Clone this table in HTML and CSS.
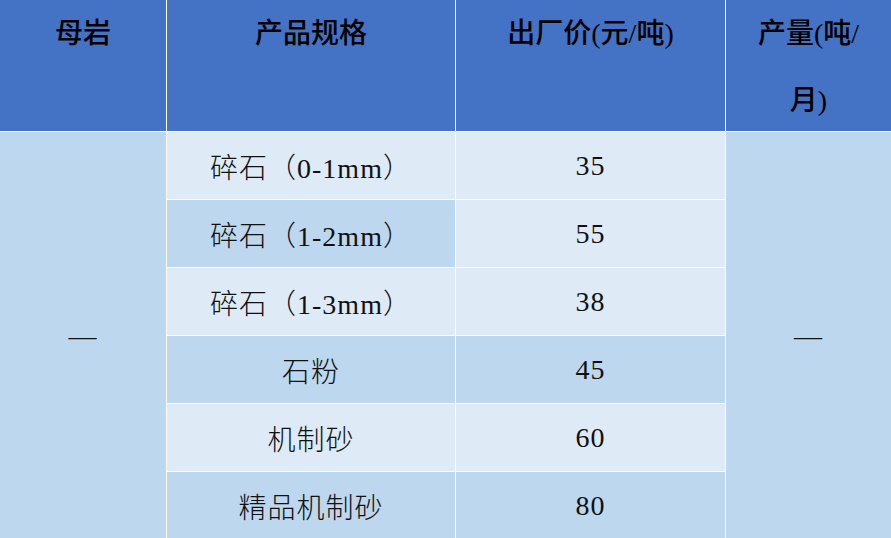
FILE: index.html
```html
<!DOCTYPE html>
<html lang="zh-CN">
<head>
<meta charset="utf-8">
<title>产品价格表</title>
<link rel="stylesheet" href="styles.css">
</head>
<body>
<div class="table">
  <div class="th">母岩</div>
  <div class="th">产品规格</div>
  <div class="th">出厂价(元/吨)</div>
  <div class="th">产量(吨/<br>月)</div>

  <div class="td span dark">—</div>
  <div class="td light">碎石（0-1mm）</div>
  <div class="td light">35</div>
  <div class="td span dark col4">—</div>

  <div class="td dark">碎石（1-2mm）</div>
  <div class="td light">55</div>

  <div class="td light">碎石（1-3mm）</div>
  <div class="td light">38</div>

  <div class="td dark">石粉</div>
  <div class="td dark">45</div>

  <div class="td light">机制砂</div>
  <div class="td light">60</div>

  <div class="td dark">精品机制砂</div>
  <div class="td dark">80</div>
</div>
</body>
</html>
```
FILE: styles.css
```css
html, body {
  margin: 0;
  padding: 0;
  background: #ffffff;
  overflow: hidden;
}

.table {
  display: grid;
  grid-template-columns: 166px 288px 269px 165px;
  grid-template-rows: 131px repeat(6, 67px);
  gap: 1px;
  background: #ffffff;
  width: 891px;
  font-family: "Liberation Serif", "Noto Sans CJK SC", serif;
  color: #000000;
}

.th {
  background: #4472c4;
  font-size: 28px;
  line-height: 67px;
  text-align: center;
  font-family: "Liberation Serif", "Noto Sans CJK SC", sans-serif;
  font-weight: 500;
}

.td {
  display: flex;
  align-items: center;
  justify-content: center;
  font-size: 28px;
  font-weight: 300;
  letter-spacing: 1px;
  color: #111111;
}

.span {
  grid-row: 2 / span 6;
  grid-column: 1;
}

.span.col4 {
  grid-column: 4;
}

.light {
  background: #deebf7;
}

.dark {
  background: #bdd7ee;
}
```
